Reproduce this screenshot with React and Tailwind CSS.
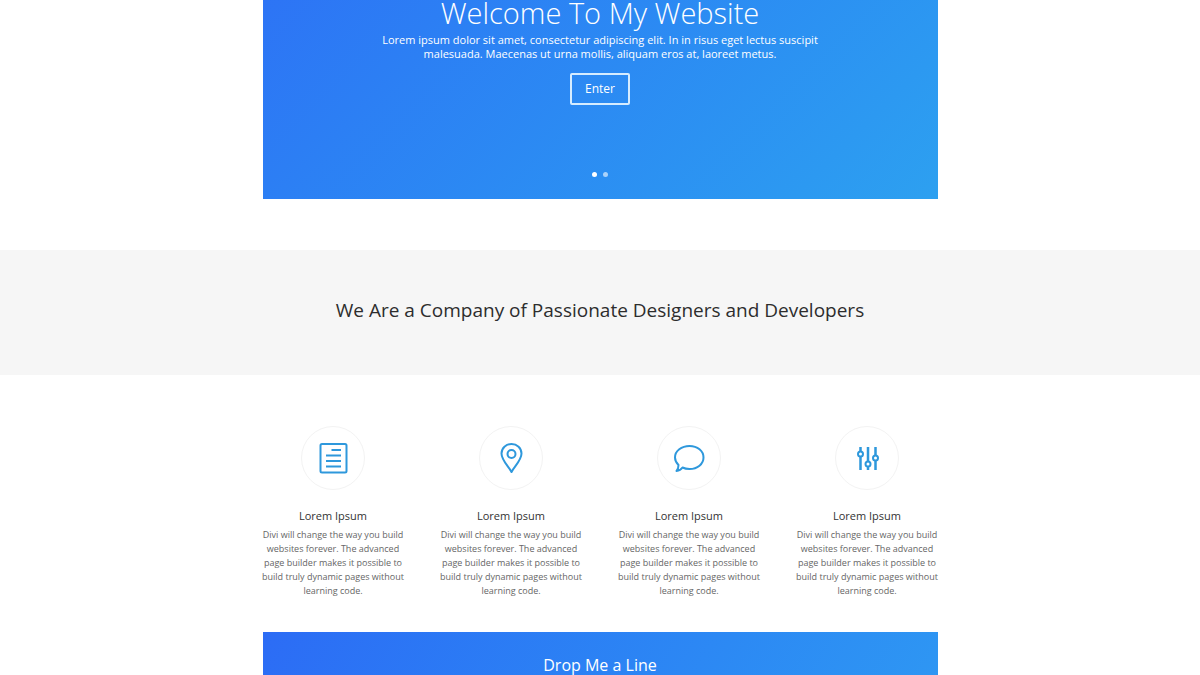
const iconProps = {
  viewBox: '0 0 32 32',
  fill: 'none',
  stroke: 'currentColor',
  strokeWidth: 2,
  strokeLinejoin: 'round',
  'aria-hidden': true,
  className: 'size-8',
};

function DocumentIcon() {
  return (
    <svg {...iconProps}>
      <rect x="3.500" y="2" width="26" height="28.5" rx="1.5" />
      <path d="M14.500 8H24M9 13.500H24M9 19H24M9 24.500H24" />
    </svg>
  );
}

function PinIcon() {
  return (
    <svg {...iconProps}>
      <path d="M16.500 30C14.500 25.500 6.500 18.500 6.500 11.500C6.500 6 11 2 16.500 2S26.500 6 26.500 11.500C26.500 18.500 18.500 25.500 16.500 30Z" />
      <circle cx="16.500" cy="12" r="4" />
    </svg>
  );
}

function BubbleIcon() {
  return (
    <svg {...iconProps}>
      <path d="M16.5 4C24.5 4 30.5 9 30.5 15.5S24.5 27 16.5 27C14 27 11.5 26.500 9.500 25.500C8 27.800 6 28.800 3.500 29C5 27.300 5.500 25.500 5.500 23C3.500 21 2 18.500 2 15.500C2 9 8.500 4 16.500 4Z" />
    </svg>
  );
}

function SlidersIcon() {
  return (
    <svg {...iconProps}>
      <path d="M9.500 5V9.500M9.500 14.500V28M17 5V19.500M17 24.500V28M24.500 5V13.500M24.500 18.500V28" strokeWidth="2.500" />
      <circle cx="9.500" cy="12" r="2.500" />
      <circle cx="17" cy="22" r="2.500" />
      <circle cx="24.500" cy="16" r="2.500" />
    </svg>
  );
}

const features = [
  { id: 'document', Icon: DocumentIcon },
  { id: 'location', Icon: PinIcon },
  { id: 'comment', Icon: BubbleIcon },
  { id: 'settings', Icon: SlidersIcon },
];

function Feature({ Icon }) {
  return (
    <article className="flex flex-col items-center text-center">
      <div className="flex size-16 items-center justify-center rounded-full border border-[#f3f3f3] text-[#2e98dc]">
        <Icon />
      </div>
      <h3 className="mt-4 text-[11px] leading-5 font-medium text-[#333]">Lorem Ipsum</h3>
      <p className="-mx-1 mt-0.5 text-[9px] leading-[14px] text-[#666]">
        Divi will change the way you build websites forever. The advanced page builder makes it
        possible to build truly dynamic pages without learning code.
      </p>
    </article>
  );
}

export default function App() {
  return (
    <main className="bg-white font-['Open_Sans',sans-serif]">
      <section className="mx-auto flex max-w-[675px] flex-col items-center bg-linear-135 from-[#2d74f5] to-[#2da0f0] pb-[22px] text-center text-white">
        <h1 className="text-[29px] leading-[26px] font-light">Welcome To My Website</h1>
        <p className="mt-[7px] max-w-[460px] text-[11px] leading-[14px]">
          Lorem ipsum dolor sit amet, consectetur adipiscing elit. In in risus eget lectus suscipit
          malesuada. Maecenas ut urna mollis, aliquam eros at, laoreet metus.
        </p>
        <button type="button" className="mt-3 h-8 rounded-xs border-2 border-[#d5ecff] px-[13px] text-[12px] leading-4">
          Enter
        </button>
        <div className="mt-[67px] flex gap-1.5">
          <button type="button" aria-label="Slide 1" className="size-[5px] rounded-full bg-white" />
          <button type="button" aria-label="Slide 2" className="size-[5px] rounded-full bg-white/60" />
        </div>
      </section>

      <section className="mt-[51px] bg-[#f6f6f6] pt-[46px] pb-[51px] text-center">
        <h2 className="text-[19px] leading-[28px] text-[#2d2d2d]">
          We Are a Company of Passionate Designers and Developers
        </h2>
      </section>

      <section className="mx-auto mt-[51px] grid max-w-[675px] grid-cols-2 gap-x-[37px] gap-y-8 sm:grid-cols-4">
        {features.map(({ id, Icon }) => (
          <Feature key={id} Icon={Icon} />
        ))}
      </section>

      <section className="mx-auto mt-[34px] max-w-[675px] bg-linear-120 from-[#2c6cf5] to-[#2e96f3] pt-[23px] text-center text-white">
        <h2 className="text-[16px] leading-5">Drop Me a Line</h2>
      </section>
    </main>
  );
}
